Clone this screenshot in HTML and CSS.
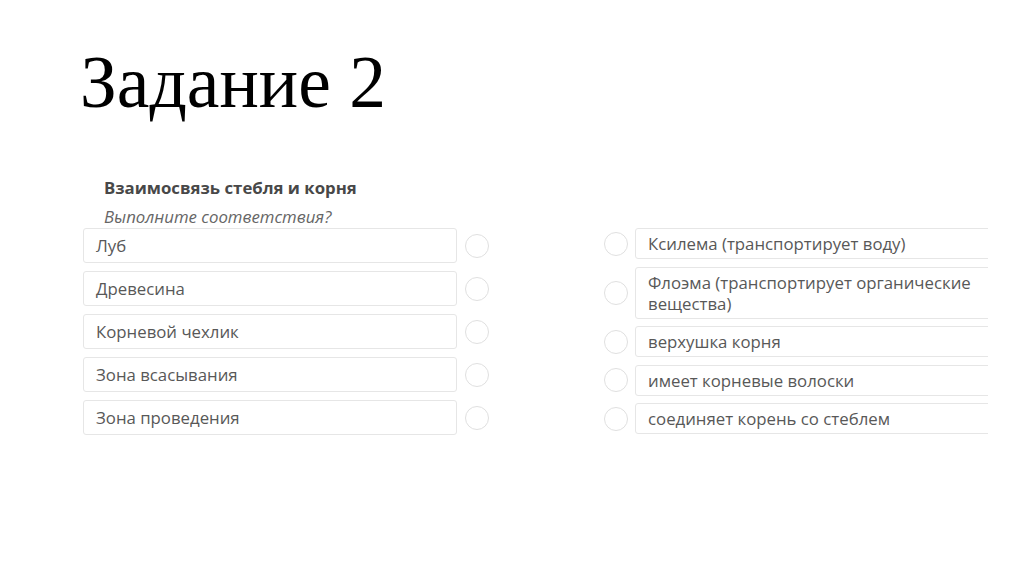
FILE: index.html
```html
<!DOCTYPE html>
<html lang="ru">
<head>
  <meta charset="UTF-8">
  <title>Задание 2</title>
  <link rel="stylesheet" href="styles.css">
</head>
<body>
  <div class="slide">
    <h1 class="slide-title">Задание 2</h1>

    <div class="quiz">
      <div class="quiz-title">Взаимосвязь стебля и корня</div>
      <div class="quiz-sub">Выполните соответствия?</div>

      <div class="match">
        <!-- левая колонка -->
        <div class="col-left">
          <div class="row"><div class="box">Луб</div><span class="dot"></span></div>
          <div class="row"><div class="box">Древесина</div><span class="dot"></span></div>
          <div class="row"><div class="box">Корневой чехлик</div><span class="dot"></span></div>
          <div class="row"><div class="box">Зона всасывания</div><span class="dot"></span></div>
          <div class="row"><div class="box">Зона проведения</div><span class="dot"></span></div>
        </div>

        <!-- правая колонка -->
        <div class="col-right">
          <div class="row"><span class="dot"></span><div class="box">Ксилема (транспортирует воду)</div></div>
          <div class="row"><span class="dot"></span><div class="box">Флоэма (транспортирует органические вещества)</div></div>
          <div class="row"><span class="dot"></span><div class="box">верхушка корня</div></div>
          <div class="row"><span class="dot"></span><div class="box">имеет корневые волоски</div></div>
          <div class="row"><span class="dot"></span><div class="box">соединяет корень со стеблем</div></div>
        </div>
      </div>
    </div>
  </div>
</body>
</html>
```

FILE: styles.css
```css
body {
  margin: 0;
  background: #fff;
}

.slide {
  width: 1011px;
  height: 564px;
  overflow: hidden;
  padding-top: 46px;
  box-sizing: border-box;
}

.slide-title {
  margin: 0 0 0 80px;
  font-family: "Liberation Serif", serif;
  font-weight: normal;
  font-size: 73.5px;
  line-height: 74px;
  color: #000;
}

.quiz {
  margin: 57px 0 0 83px;
  font-family: "Open Sans", sans-serif;
  color: #555;
}

.quiz-title {
  padding-left: 21px;
  font-size: 16.8px;
  font-weight: bold;
  color: #484848;
  line-height: 22px;
}

.quiz-sub {
  padding-left: 21px;
  margin: 8px 0 1px;
  font-size: 16.8px;
  font-style: italic;
  line-height: 20px;
  color: #666;
}

.match {
  display: flex;
}

.col-left {
  display: flex;
  flex-direction: column;
  gap: 8px;
}

.col-right {
  display: flex;
  flex-direction: column;
  gap: 7.5px;
  margin-left: 115px;
  width: 384px;
  overflow: hidden;
}

.row {
  display: flex;
  align-items: center;
  gap: 7px;
}

.col-left .row {
  gap: 8px;
}

.box {
  box-sizing: border-box;
  border: 1px solid #e6e6e6;
  border-radius: 3px;
  font-size: 16.8px;
  color: #585858;
}

.col-left .box {
  width: 374px;
  padding: 7px 12px;
  line-height: 19px;
}

.col-right .box {
  width: 400px;
  flex-shrink: 0;
  padding: 4px 40px 4px 12px;
  line-height: 21px;
}

.dot {
  flex: none;
  width: 22px;
  height: 22px;
  border: 1.5px solid #e0e0e0;
  border-radius: 50%;
}
```
